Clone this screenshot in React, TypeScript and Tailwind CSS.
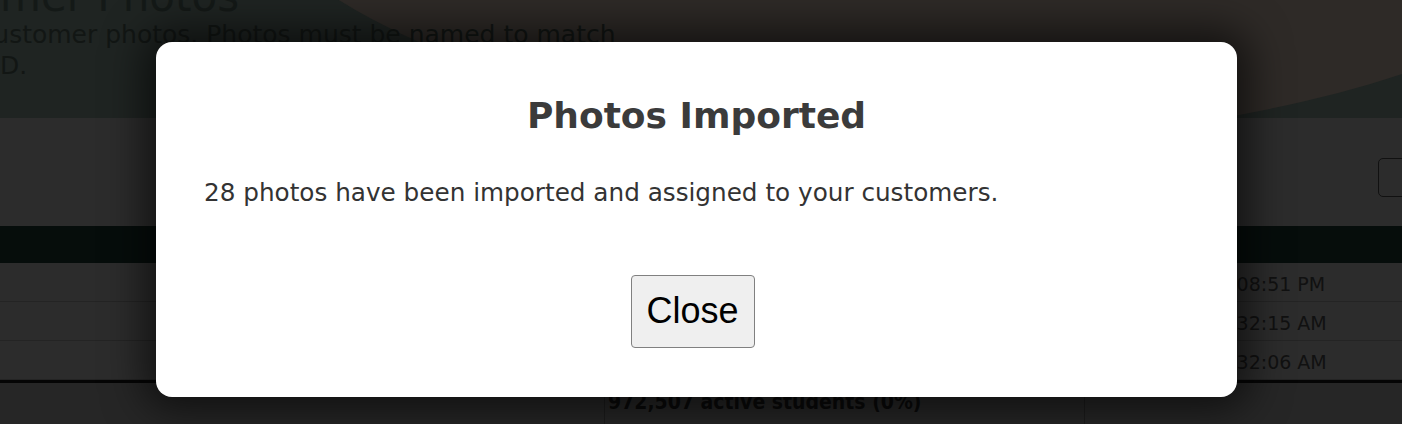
import React from "react";

const tahoma = { fontFamily: '"DejaVu Sans", Verdana, sans-serif' };

const rows = [
  { time: "10:08:51 PM" },
  { time: "11:32:15 AM" },
  { time: "10:32:06 AM" },
];

export default function App() {
  return (
    <div className="relative h-[424px] w-[1402px] overflow-hidden bg-[#2c2c2c]" style={tahoma}>
      {/* dimmed page behind the dialog */}
      <div className="flex flex-col">
        <div className="relative h-[118px] overflow-hidden bg-[#1f2422]">
          <div className="absolute -right-[300px] -top-[520px] h-[660px] w-[1500px] rounded-[50%] bg-[#2e2a27]" />
          <div className="relative -ml-[120px] -mt-[24px] whitespace-nowrap text-[42px] leading-[42px] text-[#141917]">
            Customer Photos
          </div>
          <div className="relative -ml-[116px] mt-[1px] whitespace-nowrap text-[25px] leading-[31px] text-[#121614]">
            Upload customer photos. Photos must be named to match
          </div>
          <div className="relative -ml-[133px] whitespace-nowrap text-[25px] leading-[31px] text-[#121614]">
            customer ID.
          </div>
        </div>
        <div className="flex h-[108px] justify-end bg-[#2c2c2c] pt-[40px]">
          <div className="-mr-[20px] h-[39px] w-[44px] rounded-[5px] border border-[#111]" />
        </div>
        <div className="h-[37px] bg-[#060d0b]" />
        {rows.map((r) => (
          <div
            key={r.time}
            className="flex h-[39px] items-center border-b border-[#242424] bg-[#2c2c2c] pt-[4px] text-[19px] text-[#111]"
          >
            <div className="w-[1206px]" />
            <div>{r.time}</div>
          </div>
        ))}
        <div className="h-[3px] bg-[#050505]" />
        <div className="flex h-[44px] bg-[#262626]">
          <div className="w-[605px] border-r border-[#1c1c1c]" />
          <div
            className="w-[480px] border-r border-[#1c1c1c] pl-[3px] pt-[4px] text-[21px] font-bold text-[#0a0a0a]"
            style={{ fontFamily: '"DejaVu Sans Condensed", sans-serif' }}
          >
            972,507 active students (0%)
          </div>
        </div>
      </div>

      {/* dialog */}
      <div className="absolute left-[156px] top-[42px] flex h-[355px] w-[1081px] flex-col items-center rounded-[16px] bg-white px-[48px] pt-[52px] shadow-[0_0_40px_12px_rgba(0,0,0,0.6)]">
        <h2 className="text-[36px] font-bold leading-[44px] text-[#3b3b3b]">Photos Imported</h2>
        <p className="mt-[39px] self-start text-[24.7px] leading-[32px] text-[#333]">
          28 photos have been imported and assigned to your customers.
        </p>
        <button
          className="mr-[8px] mt-[66px] h-[73px] w-[124px] rounded-[4px] border border-[#808080] bg-[#efefef] pb-[2px] text-[36px] text-black"
          style={{ fontFamily: '"Liberation Sans", Arial, sans-serif' }}
        >
          Close
        </button>
      </div>
    </div>
  );
}
